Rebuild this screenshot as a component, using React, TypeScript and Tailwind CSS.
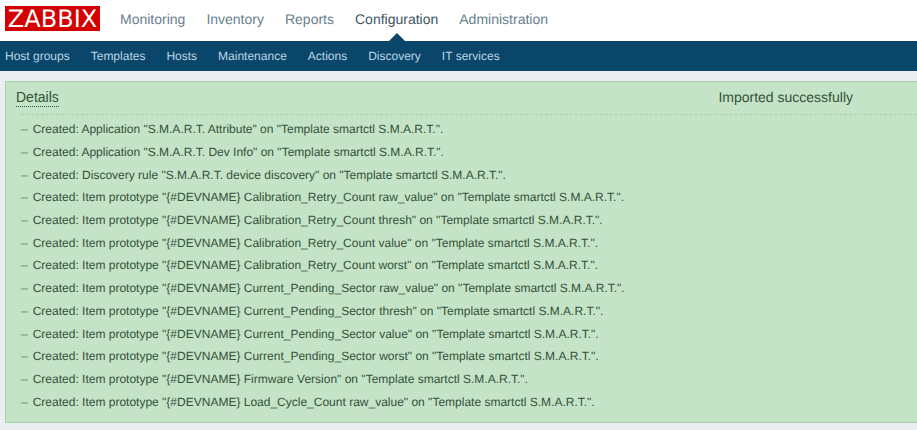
import clsx from "clsx";

const MAIN_MENU = [
  "Monitoring",
  "Inventory",
  "Reports",
  "Configuration",
  "Administration",
];

const SUB_MENU = [
  "Host groups",
  "Templates",
  "Hosts",
  "Maintenance",
  "Actions",
  "Discovery",
  "IT services",
];

const ACTIVE = "Configuration";

const TEMPLATE = "Template smartctl S.M.A.R.T.";

const CREATED = [
  { kind: "Application", name: "S.M.A.R.T. Attribute" },
  { kind: "Application", name: "S.M.A.R.T. Dev Info" },
  { kind: "Discovery rule", name: "S.M.A.R.T. device discovery" },
  { kind: "Item prototype", name: "{#DEVNAME} Calibration_Retry_Count raw_value" },
  { kind: "Item prototype", name: "{#DEVNAME} Calibration_Retry_Count thresh" },
  { kind: "Item prototype", name: "{#DEVNAME} Calibration_Retry_Count value" },
  { kind: "Item prototype", name: "{#DEVNAME} Calibration_Retry_Count worst" },
  { kind: "Item prototype", name: "{#DEVNAME} Current_Pending_Sector raw_value" },
  { kind: "Item prototype", name: "{#DEVNAME} Current_Pending_Sector thresh" },
  { kind: "Item prototype", name: "{#DEVNAME} Current_Pending_Sector value" },
  { kind: "Item prototype", name: "{#DEVNAME} Current_Pending_Sector worst" },
  { kind: "Item prototype", name: "{#DEVNAME} Firmware Version" },
  { kind: "Item prototype", name: "{#DEVNAME} Load_Cycle_Count raw_value" },
];

const Header = () => (
  <header>
    <div className="flex h-[41px] items-center bg-white pl-[5px]">
      <a
        href="#home"
        className="-mt-1 mr-5 flex h-[25px] w-[95px] items-center justify-center bg-[#d40000] font-['DejaVu_Sans',sans-serif] text-2xl leading-6 text-white"
      >
        ZABBIX
      </a>
      <nav aria-label="Main" className="flex h-full gap-[21px]">
        {MAIN_MENU.map((item) => (
          <a
            key={item}
            href="#menu"
            className={clsx(
              "relative h-full text-sm leading-[39px]",
              item === ACTIVE ? "text-[#3c5563]" : "text-[#68808e]"
            )}
          >
            {item}
            {/* pointer that joins the active tab to the sub menu */}
            {item === ACTIVE && (
              <svg
                viewBox="0 0 16 8"
                className="absolute bottom-0 left-1/2 h-2 w-4 -translate-x-1/2 fill-[#0a466a]"
                aria-hidden="true"
              >
                <path d="M0 8 8 0l8 8z" />
              </svg>
            )}
          </a>
        ))}
      </nav>
    </div>
    <nav
      aria-label="Configuration"
      className="flex h-[30px] gap-[21px] bg-[#0a466a] pl-[5px] text-xs leading-[30px] text-[#bdd5e3]"
    >
      {SUB_MENU.map((item) => (
        <a key={item} href="#sub">
          {item}
        </a>
      ))}
    </nav>
  </header>
);

const ImportMessage = () => (
  <section className="ml-[5px] mt-[10px] rounded-l-xs border-y border-l border-[#a5d0a8] bg-[#c5e3c6] pb-[9px] pl-[10px] text-[#33523a]">
    <div className="flex items-start justify-between pr-16 pt-[7px] text-sm leading-4">
      <button
        type="button"
        aria-expanded="true"
        className="border-b border-dotted border-[#33523a] pb-px"
      >
        Details
      </button>
      <span>Imported successfully</span>
    </div>
    <ul className="ml-[5px] mt-[7px] grid min-h-[299px] auto-rows-fr border-t border-dashed border-[#a9d1ab] pt-[3px] text-xs">
      {CREATED.map(({ kind, name }) => (
        <li key={name} className="flex items-center gap-[5px]">
          <span className="text-[#5f8a63]">–</span>
          <span>
            Created: {kind} "{name}" on "{TEMPLATE}".
          </span>
        </li>
      ))}
    </ul>
  </section>
);

const App = () => (
  <div className="min-h-screen overflow-hidden bg-[#ebeef0] font-['Liberation_Sans',Arial,sans-serif] [text-rendering:geometricPrecision]">
    <Header />
    <ImportMessage />
  </div>
);

export default App;
